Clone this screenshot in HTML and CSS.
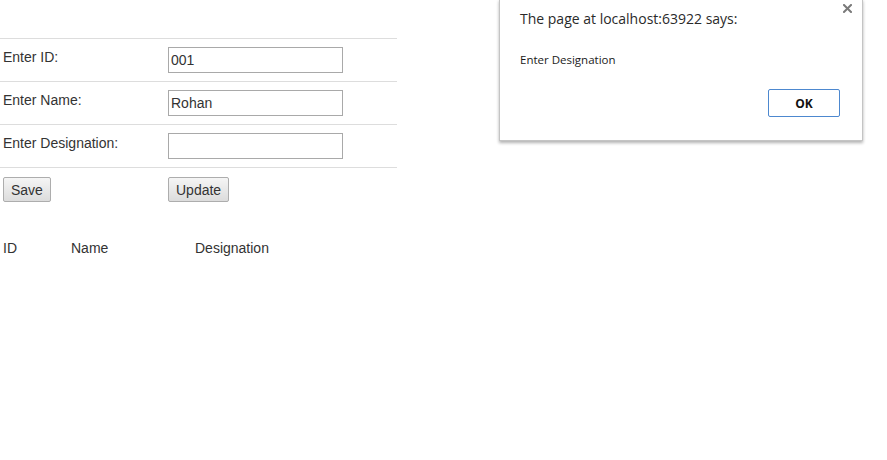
FILE: index.html
```html
<!DOCTYPE html>
<html lang="en">
<head>
  <meta charset="UTF-8" />
  <title>Employee Form</title>
  <link rel="stylesheet" href="styles.css">
</head>
<body>
  <table class="form-table">
    <colgroup>
      <col class="label-col" />
      <col />
    </colgroup>
    <tr>
      <td>Enter ID:</td>
      <td><input type="text" value="001" /></td>
    </tr>
    <tr>
      <td>Enter Name:</td>
      <td><input type="text" value="Rohan" /></td>
    </tr>
    <tr>
      <td>Enter Designation:</td>
      <td><input type="text" value="" /></td>
    </tr>
    <tr class="actions">
      <td><button type="button">Save</button></td>
      <td><button type="button">Update</button></td>
    </tr>
  </table>

  <table class="list-table">
    <tr>
      <th class="col-id">ID</th>
      <th class="col-name">Name</th>
      <th>Designation</th>
    </tr>
  </table>

  <div class="alert-box" role="alertdialog" aria-label="Alert">
    <svg class="alert-close" width="9" height="9" viewBox="0 0 9 9" aria-label="Close">
      <path d="M1 1 L8 8 M8 1 L1 8" stroke="#7a7a7a" stroke-width="2" stroke-linecap="square" fill="none" />
    </svg>
    <div class="alert-title">The page at localhost:63922 says:</div>
    <div class="alert-message">Enter Designation</div>
    <div class="alert-actions">
      <button type="button" class="alert-ok">OK</button>
    </div>
  </div>
</body>
</html>
```

FILE: styles.css
```css
body {
  margin: 0;
  font-family: "Liberation Sans", Arial, sans-serif;
  font-size: 14px;
  line-height: 20px;
  color: #333;
  background: #fff;
}

.form-table {
  margin-top: 38px;
  width: 397px;
  border-collapse: collapse;
  table-layout: fixed;
}
.form-table .label-col {
  width: 168px;
}
.form-table td {
  border-top: 1px solid #ddd;
  padding: 8px 0 8px 3px;
  vertical-align: top;
}
.form-table td + td {
  padding-left: 0;
}
.form-table .actions td {
  padding-top: 9px;
}

input[type="text"] {
  box-sizing: border-box;
  display: block;
  width: 175px;
  height: 26px;
  margin: 0;
  padding: 0 2px;
  border: 1px solid #a9a9a9;
  font-family: "Liberation Sans", Arial, sans-serif;
  font-size: 14px;
  color: #333;
}

.actions button {
  height: 25px;
  margin: 0;
  padding: 0 7px;
  border: 1px solid #adadad;
  border-radius: 2px;
  background: linear-gradient(#f5f5f5, #dcdcdc);
  font-family: "Liberation Sans", Arial, sans-serif;
  font-size: 14px;
  color: #333;
}

.list-table {
  margin-top: 28px;
  border-collapse: collapse;
}
.list-table th {
  padding: 0 0 0 3px;
  font-weight: normal;
  text-align: left;
}
.list-table .col-id {
  width: 65px;
}
.list-table .col-name {
  width: 121px;
}

/* browser alert on top of the page */
.alert-box {
  position: absolute;
  left: 499px;
  top: -1px;
  box-sizing: border-box;
  width: 364px;
  height: 142px;
  padding: 9px 20px 0 20px;
  background: #fff;
  border: 1px solid #c4c4c4;
  box-shadow: 0 2px 3px rgba(0, 0, 0, 0.3);
  font-family: "Open Sans", "Noto Sans", sans-serif;
  color: #222;
}
.alert-close {
  position: absolute;
  right: 10px;
  top: 4px;
}
.alert-title {
  font-size: 14px;
  line-height: 20px;
  color: #2a2a2a;
}
.alert-message {
  margin-top: 23px;
  font-size: 11.5px;
  line-height: 16px;
  color: #1a1a1a;
}
.alert-actions {
  display: flex;
  justify-content: flex-end;
  margin-top: 21px;
  padding-right: 2px;
}
.alert-ok {
  width: 72px;
  height: 28px;
  border: 1px solid #4d88cf;
  border-radius: 2px;
  background: #fff;
  font-family: "Open Sans", "Noto Sans", sans-serif;
  font-size: 12px;
  font-weight: bold;
  color: #111;
}
```
